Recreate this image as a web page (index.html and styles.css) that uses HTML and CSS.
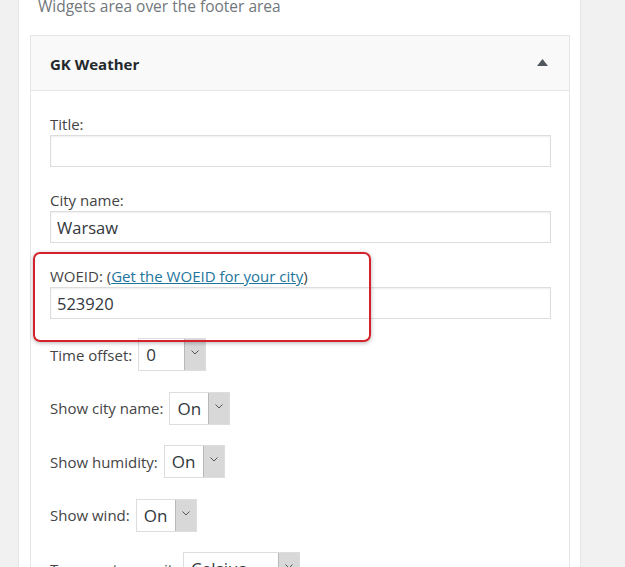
FILE: index.html
```html
<!DOCTYPE html>
<html lang="en">
<head>
    <meta charset="UTF-8">
    <meta name="viewport" content="width=device-width, initial-scale=1.0">
    <title>Widgets - GK Weather</title>
    <link rel="stylesheet" href="styles.css">
</head>
<body>
    <div class="sidebar-panel">
        <p class="sidebar-desc">Widgets area over the footer area</p>

        <div class="widget">
            <div class="widget-top">
                <h3 class="widget-title">GK Weather</h3>
                <svg class="widget-toggle" width="11" height="7" viewBox="0 0 11 7">
                    <polygon points="5.5,0 11,7 0,7" fill="#50575e"/>
                </svg>
            </div>

            <div class="widget-inside">
                <div class="field">
                    <label for="title">Title:</label>
                    <input class="text-input" type="text" id="title">
                </div>

                <div class="field">
                    <label for="city">City name:</label>
                    <input class="text-input" type="text" id="city" value="Warsaw">
                </div>

                <div class="field field-woeid">
                    <!-- annotation drawn over the screenshot -->
                    <div class="highlight"></div>
                    <label for="woeid">WOEID: (<a href="#">Get the WOEID for your city</a>)</label>
                    <input class="text-input" type="text" id="woeid" value="523920">
                </div>

                <div class="select-row">
                    <span class="select-label">Time offset:</span>
                    <div class="fake-select select-offset">
                        <span class="select-value">0</span>
                        <span class="select-arrow"><svg width="8" height="5" viewBox="0 0 8 5"><polyline points="0.5,0.5 4,4 7.5,0.5" fill="none" stroke="#555" stroke-width="1"/></svg></span>
                    </div>
                </div>

                <div class="select-row">
                    <span class="select-label">Show city name:</span>
                    <div class="fake-select select-toggle">
                        <span class="select-value">On</span>
                        <span class="select-arrow"><svg width="8" height="5" viewBox="0 0 8 5"><polyline points="0.5,0.5 4,4 7.5,0.5" fill="none" stroke="#555" stroke-width="1"/></svg></span>
                    </div>
                </div>

                <div class="select-row">
                    <span class="select-label">Show humidity:</span>
                    <div class="fake-select select-toggle">
                        <span class="select-value">On</span>
                        <span class="select-arrow"><svg width="8" height="5" viewBox="0 0 8 5"><polyline points="0.5,0.5 4,4 7.5,0.5" fill="none" stroke="#555" stroke-width="1"/></svg></span>
                    </div>
                </div>

                <div class="select-row">
                    <span class="select-label">Show wind:</span>
                    <div class="fake-select select-toggle">
                        <span class="select-value">On</span>
                        <span class="select-arrow"><svg width="8" height="5" viewBox="0 0 8 5"><polyline points="0.5,0.5 4,4 7.5,0.5" fill="none" stroke="#555" stroke-width="1"/></svg></span>
                    </div>
                </div>

                <div class="select-row">
                    <span class="select-label">Temperature unit:</span>
                    <div class="fake-select select-unit">
                        <span class="select-value">Celsius</span>
                        <span class="select-arrow"><svg width="8" height="5" viewBox="0 0 8 5"><polyline points="0.5,0.5 4,4 7.5,0.5" fill="none" stroke="#555" stroke-width="1"/></svg></span>
                    </div>
                </div>
            </div>
        </div>
    </div>
</body>
</html>
```

FILE: styles.css
```css
* {
    margin: 0;
    padding: 0;
    box-sizing: border-box;
}

body {
    background-color: #f1f1f1;
    font-family: 'Open Sans', 'Noto Sans', sans-serif;
    color: #444;
    height: 567px;
    overflow: hidden;
}

.sidebar-panel {
    width: 563px;
    margin-left: 18px;
    padding: 0 10px 40px 11px;
    background-color: #fff;
    border-left: 1px solid #e5e5e5;
    border-right: 1px solid #e5e5e5;
}

.sidebar-desc {
    font-size: 15.5px;
    line-height: 20px;
    color: #72777c;
    padding-left: 8px;
    margin-top: -4px;
    height: 39px;
}

.widget {
    border: 1px solid #e5e5e5;
    background-color: #fff;
}

.widget-top {
    height: 55px;
    background-color: #f9f9f9;
    border-bottom: 1px solid #e5e5e5;
    display: flex;
    align-items: center;
    justify-content: space-between;
    padding: 0 21px 0 19px;
}

.widget-title {
    font-size: 15px;
    font-weight: 700;
    color: #23282d;
    margin-top: 2px;
}

.widget-toggle {
    margin-top: -2px;
}

.widget-inside {
    padding: 23px 18px 20px 19px;
}

.field {
    margin-bottom: 23px;
}

.field label {
    display: block;
    font-size: 15px;
    line-height: 20px;
    margin-bottom: 1px;
}

.field a {
    color: #21759b;
}

.text-input {
    display: block;
    width: 100%;
    height: 32px;
    border: 1px solid #ddd;
    box-shadow: inset 0 1px 2px rgba(0,0,0,0.07);
    padding: 0 6px;
    font-family: inherit;
    font-size: 16.5px;
    color: #32373c;
    outline: none;
}

.field-woeid {
    position: relative;
    margin-bottom: 19px;
}

.highlight {
    position: absolute;
    left: -17px;
    top: -14px;
    width: 338px;
    height: 90px;
    border: 2px solid #d3222a;
    border-radius: 7px;
    box-shadow: 0 1px 4px rgba(0,0,0,0.3);
    pointer-events: none;
}

.select-row {
    display: flex;
    align-items: center;
    gap: 6px;
    height: 33px;
    margin-bottom: 20.5px;
}

.select-label {
    font-size: 15px;
}

.fake-select {
    display: flex;
    height: 33px;
    border: 1px solid #ddd;
    background-color: #fff;
}

.select-value {
    flex: 1;
    font-size: 17px;
    line-height: 31px;
    padding-left: 7px;
    color: #32373c;
}

.select-arrow {
    width: 21px;
    background-color: #d8d8d8;
    border-left: 1px solid #b8b8b8;
    display: flex;
    justify-content: center;
    padding-top: 11px;
}

.select-offset {
    width: 68px;
}

.select-toggle {
    width: 61px;
}

.select-unit {
    width: 117px;
}
```
